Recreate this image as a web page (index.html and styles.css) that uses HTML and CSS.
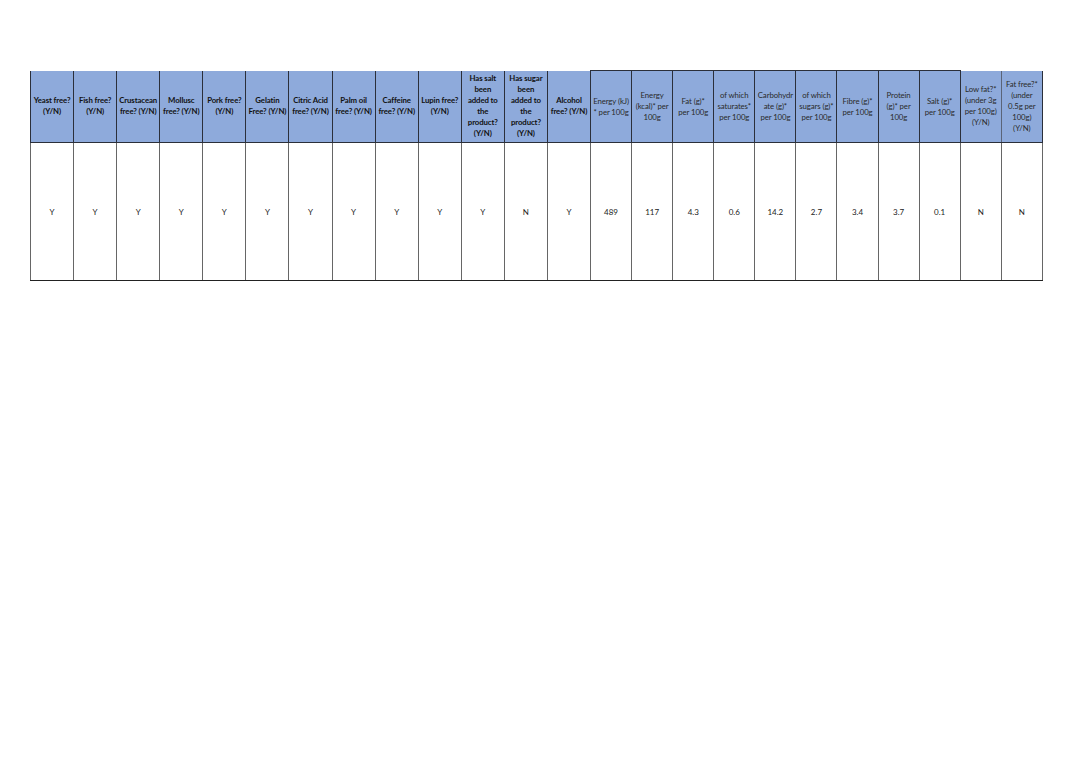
FILE: index.html
```html
<!DOCTYPE html>
<html>
<head>
<meta charset="utf-8">
<link rel="stylesheet" href="styles.css">
</head>
<body>
<div class="sheet">
<table class="grid">
<colgroup>
<col class="c1"><col class="c1"><col class="c1"><col class="c1"><col class="c1"><col class="c1"><col class="c1"><col class="c1"><col class="c1"><col class="c1"><col class="c1"><col class="c1"><col class="c1">
<col class="c2"><col class="c2"><col class="c2"><col class="c2"><col class="c2"><col class="c2"><col class="c2"><col class="c2"><col class="c2"><col class="c2"><col class="c2"><col class="c2">
</colgroup>
<thead>
<tr>
<th>Yeast free?<br>(Y/N)</th>
<th>Fish free?<br>(Y/N)</th>
<th>Crustacean<br>free? (Y/N)</th>
<th>Mollusc<br>free? (Y/N)</th>
<th>Pork free?<br>(Y/N)</th>
<th>Gelatin<br>Free? (Y/N)</th>
<th>Citric Acid<br>free? (Y/N)</th>
<th>Palm oil<br>free? (Y/N)</th>
<th>Caffeine<br>free? (Y/N)</th>
<th>Lupin free?<br>(Y/N)</th>
<th>Has salt<br>been<br>added to<br>the<br>product?<br>(Y/N)</th>
<th>Has sugar<br>been<br>added to<br>the<br>product?<br>(Y/N)</th>
<th>Alcohol<br>free? (Y/N)</th>
<th class="nut">Energy (kJ)<br>* per 100g</th>
<th class="nut">Energy<br>(kcal)* per<br>100g</th>
<th class="nut">Fat (g)*<br>per 100g</th>
<th class="nut">of which<br>saturates*<br>per 100g</th>
<th class="nut">Carbohydr<br>ate (g)*<br>per 100g</th>
<th class="nut">of which<br>sugars (g)*<br>per 100g</th>
<th class="nut">Fibre (g)*<br>per 100g</th>
<th class="nut">Protein<br>(g)* per<br>100g</th>
<th class="nut">Salt (g)*<br>per 100g</th>
<th class="claim">Low fat?*<br>(under 3g<br>per 100g)<br>(Y/N)</th>
<th class="claim last">Fat free?*<br>(under<br>0.5g per<br>100g)<br>(Y/N)</th>
</tr>
</thead>
<tbody>
<tr>
<td>Y</td><td>Y</td><td>Y</td><td>Y</td><td>Y</td><td>Y</td><td>Y</td><td>Y</td><td>Y</td><td>Y</td><td>Y</td><td>N</td><td>Y</td>
<td>489</td><td>117</td><td>4.3</td><td>0.6</td><td>14.2</td><td>2.7</td><td>3.4</td><td>3.7</td><td>0.1</td><td>N</td><td>N</td>
</tr>
</tbody>
</table>
</div>
</body>
</html>
```
FILE: styles.css
```css
html, body {
  margin: 0;
  padding: 0;
  background: #ffffff;
}
.sheet {
  padding: 70px 0 0 30px;
}
.grid {
  border-collapse: collapse;
  table-layout: fixed;
  width: 1012px;
  font-family: Lato, "Liberation Sans", Arial, sans-serif;
}
.c1 { width: 43.08px; }
.c2 { width: 41.09px; }
.grid th {
  height: 71px;
  padding: 0;
  background: #8eaadb;
  color: #111111;
  font-size: 7.8px;
  line-height: 11px;
  font-weight: bold;
  letter-spacing: -0.1px;
  white-space: nowrap;
  text-align: center;
  vertical-align: middle;
  border-left: 1px solid #2b2f3a;
  border-right: 1px solid #2b2f3a;
  border-bottom: 1px solid #2b2f3a;
  border-top: none;
  overflow: hidden;
}
.grid th.nut {
  font-weight: normal;
  color: #2a2a2a;
  border-top: 1px solid #2b2f3a;
}
.grid th.claim {
  font-weight: normal;
  color: #2a2a2a;
  border-left: 1px solid #5a6478;
  border-right: 1px solid #5a6478;
}
.grid th.last {
  border-right: 1px solid #2b2f3a;
}
.grid td {
  height: 137px;
  padding: 0;
  font-size: 8px;
  color: #222222;
  text-align: center;
  vertical-align: middle;
  border-left: 1px solid #666666;
  border-right: 1px solid #666666;
  border-bottom: 1px solid #222222;
}
```
